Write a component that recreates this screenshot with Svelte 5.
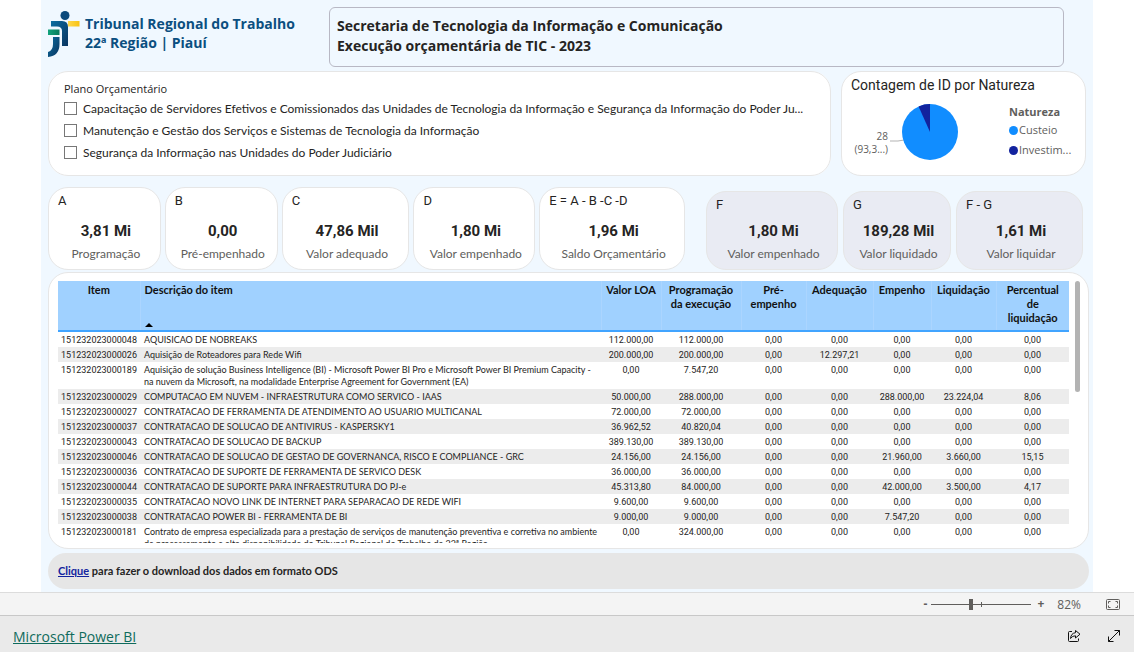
<script>
    const plans = [
        "Capacitação de Servidores Efetivos e Comissionados das Unidades de Tecnologia da Informação e Segurança da Informação do Poder Ju...",
        "Manutenção e Gestão dos Serviços e Sistemas de Tecnologia da Informação",
        "Segurança da Informação nas Unidades do Poder Judiciário",
    ];

    const budgetCards = [
        { title: "A", value: "3,81 Mi", label: "Programação" },
        { title: "B", value: "0,00", label: "Pré-empenhado" },
        { title: "C", value: "47,86 Mil", label: "Valor adequado" },
        { title: "D", value: "1,80 Mi", label: "Valor empenhado" },
        { title: "E = A - B -C -D", value: "1,96 Mi", label: "Saldo Orçamentário" },
    ];

    const paidCards = [
        { title: "F", value: "1,80 Mi", label: "Valor empenhado" },
        { title: "G", value: "189,28 Mil", label: "Valor liquidado" },
        { title: "F - G", value: "1,61 Mi", label: "Valor liquidar" },
    ];

    const columns = [
        "Item",
        "Descrição do item",
        "Valor LOA",
        "Programação da execução",
        "Pré-empenho",
        "Adequação",
        "Empenho",
        "Liquidação",
        "Percentual de liquidação",
    ];

    const rows = [
        ["151232023000048", "AQUISICAO DE NOBREAKS", "112.000,00", "112.000,00", "0,00", "0,00", "0,00", "0,00", "0,00"],
        ["151232023000026", "Aquisição de Roteadores para Rede Wifi", "200.000,00", "200.000,00", "0,00", "12.297,21", "0,00", "0,00", "0,00"],
        ["151232023000189", "Aquisição de solução Business Intelligence (BI) - Microsoft Power BI Pro e Microsoft Power BI Premium Capacity - na nuvem da Microsoft, na modalidade Enterprise Agreement for Government (EA)", "0,00", "7.547,20", "0,00", "0,00", "0,00", "0,00", "0,00"],
        ["151232023000029", "COMPUTACAO EM NUVEM - INFRAESTRUTURA COMO SERVICO - IAAS", "50.000,00", "288.000,00", "0,00", "0,00", "288.000,00", "23.224,04", "8,06"],
        ["151232023000027", "CONTRATACAO DE FERRAMENTA DE ATENDIMENTO AO USUARIO MULTICANAL", "72.000,00", "72.000,00", "0,00", "0,00", "0,00", "0,00", "0,00"],
        ["151232023000037", "CONTRATACAO DE SOLUCAO DE ANTIVIRUS - KASPERSKY1", "36.962,52", "40.820,04", "0,00", "0,00", "0,00", "0,00", "0,00"],
        ["151232023000043", "CONTRATACAO DE SOLUCAO DE BACKUP", "389.130,00", "389.130,00", "0,00", "0,00", "0,00", "0,00", "0,00"],
        ["151232023000046", "CONTRATACAO DE SOLUCAO DE GESTAO DE GOVERNANCA, RISCO E COMPLIANCE - GRC", "24.156,00", "24.156,00", "0,00", "0,00", "21.960,00", "3.660,00", "15,15"],
        ["151232023000036", "CONTRATACAO DE SUPORTE DE FERRAMENTA DE SERVICO DESK", "36.000,00", "36.000,00", "0,00", "0,00", "0,00", "0,00", "0,00"],
        ["151232023000044", "CONTRATACAO DE SUPORTE PARA INFRAESTRUTURA DO PJ-e", "45.313,80", "84.000,00", "0,00", "0,00", "42.000,00", "3.500,00", "4,17"],
        ["151232023000035", "CONTRATACAO NOVO LINK DE INTERNET PARA SEPARACAO DE REDE WIFI", "9.600,00", "9.600,00", "0,00", "0,00", "0,00", "0,00", "0,00"],
        ["151232023000038", "CONTRATACAO POWER BI - FERRAMENTA DE BI", "9.000,00", "9.000,00", "0,00", "0,00", "7.547,20", "0,00", "0,00"],
        ["151232023000181", "Contrato de empresa especializada para a prestação de serviços de manutenção preventiva e corretiva no ambiente de processamento e alta disponibilidade do Tribunal Regional do Trabalho da 22ª Região.", "0,00", "324.000,00", "0,00", "0,00", "0,00", "0,00", "0,00"],
    ];

    let zoom = 39;
</script>

<main>
    <div class="report">
        <header>
            <div class="brand">
                <svg class="logo" viewBox="0 0 32 46" width="32" height="46" aria-hidden="true">
                    <defs>
                        <linearGradient id="navy" x1="0" y1="0" x2="1" y2="1">
                            <stop offset="0" stop-color="#0b6c9f" />
                            <stop offset="1" stop-color="#0a3560" />
                        </linearGradient>
                        <linearGradient id="green" x1="0" x2="1">
                            <stop offset="0" stop-color="#12a37c" />
                            <stop offset="1" stop-color="#067a5b" />
                        </linearGradient>
                        <linearGradient id="yellow" x1="0" x2="1">
                            <stop offset="0" stop-color="#ffd84d" />
                            <stop offset="1" stop-color="#f8c313" />
                        </linearGradient>
                    </defs>
                    <circle cx="17" cy="4.500" r="4.500" fill="#0b4a7c" />
                    <path d="M3 10H14Q20 10 20 16V35H14V20Q14 15.500 9 15.500H3Z" fill="url(#navy)" />
                    <path d="M5 26H11.500V33Q11.500 45 0 46V41Q5 39.500 5 33Z" fill="url(#navy)" />
                    <rect x="0" y="18.500" width="11.500" height="5.500" fill="url(#green)" />
                    <rect x="20" y="10" width="11.500" height="5.500" fill="url(#yellow)" />
                </svg>
                <div class="brand-name">Tribunal Regional do Trabalho<br />22ª Região | Piauí</div>
            </div>
            <h1>Secretaria de Tecnologia da Informação e Comunicação<br />Execução orçamentária de TIC - 2023</h1>
        </header>

        <div class="filters">
            <fieldset class="card slicer">
                <legend>Plano Orçamentário</legend>
                {#each plans as plan}
                    <label>
                        <input type="checkbox" />
                        <span>{plan}</span>
                    </label>
                {/each}
            </fieldset>

            <section class="card chart">
                <h2>Contagem de ID por Natureza</h2>
                <div class="chart-body">
                    <div class="pie-label">28<br />(93,3...)</div>
                    <svg class="pie" viewBox="0 0 68 56" width="68" height="56" aria-hidden="true">
                        <path d="M0 37H8L14 36" fill="none" stroke="#b3b3b3" />
                        <circle cx="40" cy="28" r="28" fill="#118dff" />
                        <path d="M40 28V0A28 28 0 0 0 28.600 2.400Z" fill="#12239e" />
                    </svg>
                    <div class="legend">
                        <strong>Natureza</strong>
                        <span><i class="dot custeio"></i>Custeio</span>
                        <span><i class="dot invest"></i>Investim...</span>
                    </div>
                </div>
            </section>
        </div>

        <div class="kpis">
            <div class="group budget">
                {#each budgetCards as { title, value, label }}
                    <div class="card kpi">
                        <h3>{title}</h3>
                        <div class="value">{value}</div>
                        <div class="label">{label}</div>
                    </div>
                {/each}
            </div>
            <div class="group paid">
                {#each paidCards as { title, value, label }}
                    <div class="card kpi grey">
                        <h3>{title}</h3>
                        <div class="value">{value}</div>
                        <div class="label">{label}</div>
                    </div>
                {/each}
            </div>
        </div>

        <section class="card items">
            <div class="table-wrap">
                <table>
                    <colgroup>
                        {#each columns as _, i}
                            <col class="col{i}" />
                        {/each}
                    </colgroup>
                    <thead>
                        <tr>
                            {#each columns as column, i}
                                <th scope="col">
                                    {column}
                                    {#if i === 1}
                                        <svg class="sort" viewBox="0 0 8 4" width="8" height="4" aria-hidden="true">
                                            <path d="M0 4L4 0L8 4Z" />
                                        </svg>
                                    {/if}
                                </th>
                            {/each}
                        </tr>
                    </thead>
                    <tbody>
                        {#each rows as row}
                            <tr>
                                {#each row as cell}
                                    <td>{cell}</td>
                                {/each}
                            </tr>
                        {/each}
                    </tbody>
                </table>
            </div>
            <div class="scrollbar"></div>
        </section>

        <p class="download"><a href="#ods">Clique</a> <span>para fazer o</span> download dos dados em formato ODS</p>
    </div>

    <div class="zoombar">
        <button class="step" aria-label="Diminuir zoom">-</button>
        <input type="range" min="0" max="100" bind:value={zoom} aria-label="Zoom" />
        <button class="step" aria-label="Aumentar zoom">+</button>
        <span class="percent">82%</span>
        <button class="fit" aria-label="Ajustar à página">
            <svg viewBox="0 0 14 11" width="14" height="11" fill="none" stroke="#605e5c">
                <rect x="0.500" y="0.500" width="13" height="10" rx="1" />
                <path d="M2.500 4.500V2.500H4.500M9.500 2.500H11.500V4.500M11.500 6.500V8.500H9.500M4.500 8.500H2.500V6.500" />
            </svg>
        </button>
    </div>

    <footer>
        <a href="#powerbi">Microsoft Power BI</a>
        <button aria-label="Compartilhar">
            <svg viewBox="0 0 14 14" width="14" height="14" fill="none" stroke="#111" stroke-linejoin="round">
                <path d="M5 2.500H2.500Q1.500 2.500 1.500 3.500V11.500Q1.500 12.500 2.500 12.500H10.500Q11.500 12.500 11.500 11.500V9.500" />
                <path d="M8.500 1.500L13 5.200L8.500 9V6.800Q5.500 6.600 3.500 9.500Q4 4.200 8.500 3.700Z" />
            </svg>
        </button>
        <button aria-label="Tela cheia">
            <svg viewBox="0 0 14 14" width="14" height="14" fill="none" stroke="#111">
                <path d="M1.500 12.500L12.500 1.500M7.500 1.500H12.500V6.500M1.500 7.500V12.500H6.500" />
            </svg>
        </button>
    </footer>
</main>

<style>
    :global(body) {
        margin: 0;
        background: #fff;
    }

    main {
        font-family: "Open Sans", "Noto Sans", sans-serif;
        color: #252423;
    }

    h1,
    h2,
    h3,
    p {
        margin: 0;
        font-weight: 400;
    }

    button {
        padding: 0;
        border: none;
        background: none;
        font: inherit;
        color: inherit;
        cursor: pointer;
        line-height: 1;
    }

    svg {
        display: block;
    }

    .report {
        box-sizing: border-box;
        margin: 0 41px;
        padding: 7px 4px 3px 7px;
        background: #f0f8ff;
    }

    .card {
        box-sizing: border-box;
        border: 1px solid #e6e6e6;
        border-radius: 20px;
        background: #fff;
    }

    header {
        display: flex;
        margin-right: 25px;
    }

    .brand {
        display: flex;
        gap: 5px;
        flex: 0 0 281px;
        padding-top: 4px;
    }

    .brand-name {
        padding-top: 3px;
        font-size: 14px;
        font-weight: 700;
        line-height: 19px;
        color: #0b4f80;
        white-space: nowrap;
    }

    h1 {
        flex: 1;
        box-sizing: border-box;
        height: 60px;
        padding: 8px 7px;
        border: 1px solid #b8b8c4;
        border-radius: 6px;
        font-size: 14px;
        font-weight: 700;
        line-height: 20px;
    }

    .filters {
        display: flex;
        gap: 10px;
        margin: 4px 3px 0 0;
    }

    .slicer {
        flex: 1;
        min-width: 0;
        margin: 0;
        padding: 9px 14px 9px 15px;
        height: 105px;
    }

    .slicer legend {
        float: left;
        width: 100%;
        padding: 0;
        font-size: 11px;
        line-height: 16px;
    }

    .slicer label {
        display: flex;
        align-items: center;
        gap: 6px;
        clear: both;
        height: 22px;
        font-family: Lato, sans-serif;
        font-size: 12px;
    }

    .slicer label span {
        white-space: nowrap;
    }

    input[type="checkbox"] {
        appearance: none;
        flex: none;
        width: 13px;
        height: 13px;
        margin: 0;
        border: 1px solid #777;
        background: #fff;
    }

    .chart {
        flex: 0 0 245px;
        height: 105px;
        padding: 4px 9px;
    }

    h2 {
        font-family: Roboto, sans-serif;
        font-size: 14px;
        line-height: 18px;
    }

    .chart-body {
        display: flex;
        align-items: flex-start;
        padding-top: 10px;
    }

    .pie-label {
        width: 37px;
        padding-top: 26px;
        font-size: 10px;
        line-height: 13px;
        text-align: right;
        color: #605e5c;
    }

    .pie {
        margin-left: 2px;
    }

    .legend {
        display: flex;
        flex-direction: column;
        margin-left: 51px;
        font-size: 11px;
        line-height: 20px;
        color: #605e5c;
        white-space: nowrap;
    }

    .legend strong {
        line-height: 16px;
    }

    .legend span {
        display: flex;
        align-items: center;
        gap: 1px;
    }

    .dot {
        width: 9px;
        height: 9px;
        border-radius: 50%;
    }

    .custeio {
        background: #118dff;
    }

    .invest {
        background: #12239e;
    }

    .kpis {
        display: grid;
        grid-template-columns: 637fr 377fr;
        gap: 21px;
        margin: 11px 6px 0 0;
    }

    .group {
        display: grid;
        gap: 4px;
    }

    .budget {
        grid-template-columns: 113fr 113fr 128fr 122fr 146fr;
    }

    .paid {
        grid-template-columns: 132fr 108fr 127fr;
        gap: 5px;
        padding-top: 4px;
    }

    .kpi {
        height: 83px;
        padding: 5px 6px 5px 9px;
        font-family: Roboto, sans-serif;
        white-space: nowrap;
    }

    .kpi.grey {
        height: 79px;
        background: #e9ebf3;
    }

    h3 {
        font-size: 13px;
        line-height: 16px;
    }

    .value {
        margin-top: 12px;
        font-size: 15px;
        font-weight: 700;
        line-height: 20px;
        text-align: center;
    }

    .grey .value {
        margin-top: 8px;
    }

    .label {
        margin-top: 4px;
        font-family: Lato, sans-serif;
        font-size: 12px;
        line-height: 17px;
        text-align: center;
        color: #605e5c;
    }

    .items {
        display: flex;
        gap: 6px;
        margin-top: 2px;
        height: 277px;
        padding: 8px 8px 5px 9px;
    }

    .table-wrap {
        flex: 1;
        overflow: hidden;
    }

    table {
        width: 100%;
        table-layout: fixed;
        border-collapse: collapse;
        font-family: Roboto, sans-serif;
        font-size: 9px;
        line-height: 12px;
    }

    .col0 { width: 82px; }
    .col2 { width: 60px; }
    .col3 { width: 80px; }
    .col4 { width: 65px; }
    .col5 { width: 67px; }
    .col6 { width: 58px; }
    .col7 { width: 65px; }
    .col8 { width: 73px; }

    th {
        position: relative;
        height: 47px;
        padding: 2px 3px 0;
        border-bottom: 2px solid #41a4ff;
        border-right: 1px solid #abd5ff;
        background: #a0d1ff;
        font-family: Lato, sans-serif;
        font-size: 11px;
        font-weight: 700;
        line-height: 14px;
        vertical-align: top;
        color: #111;
    }

    .sort {
        position: absolute;
        left: 4px;
        bottom: 3px;
    }

    td {
        padding: 2px 3px 1px;
        text-align: center;
        vertical-align: top;
    }

    th:nth-child(2),
    td:nth-child(2) {
        padding-left: 4px;
        text-align: left;
    }

    td:nth-child(2) {
        font-family: Lato, sans-serif;
    }

    th:last-child {
        padding: 2px 8px 0;
        border-right: none;
    }

    tbody tr:nth-child(even) {
        background: #ececec;
    }

    .scrollbar {
        width: 5px;
        height: 111px;
        border-radius: 3px;
        background: #b3b3b3;
    }

    .download {
        margin-top: 4px;
        padding: 0 10px;
        border-radius: 18px;
        background: #e6e6e6;
        font-family: Lato, sans-serif;
        font-size: 11px;
        font-weight: 700;
        line-height: 36px;
    }

    .download a {
        color: #12239e;
    }

    .zoombar {
        display: flex;
        align-items: center;
        justify-content: flex-end;
        box-sizing: border-box;
        height: 23px;
        padding-right: 14px;
        border-top: 1px solid #dcdcdc;
        background: #f4f4f4;
        font-size: 12px;
        color: #605e5c;
    }

    .step {
        font-weight: 700;
    }

    input[type="range"] {
        appearance: none;
        width: 100px;
        height: 12px;
        margin: 0 6px 0 4px;
        background:
            linear-gradient(#605e5c, #605e5c) 50px 50% / 1px 5px no-repeat,
            linear-gradient(#605e5c, #605e5c) 0 50% / 100% 1px no-repeat;
    }

    input[type="range"]::-webkit-slider-thumb {
        appearance: none;
        width: 4px;
        height: 11px;
        background: #605e5c;
    }

    .percent {
        margin-left: 13px;
    }

    .fit {
        margin-left: 25px;
    }

    footer {
        display: flex;
        align-items: center;
        gap: 26px;
        box-sizing: border-box;
        height: 37px;
        padding: 4px 13px 0;
        border-top: 1px solid #c8c8c8;
        background: #eaeaea;
    }

    footer a {
        margin-right: auto;
        font-size: 14px;
        color: #0f6b5c;
    }
</style>
